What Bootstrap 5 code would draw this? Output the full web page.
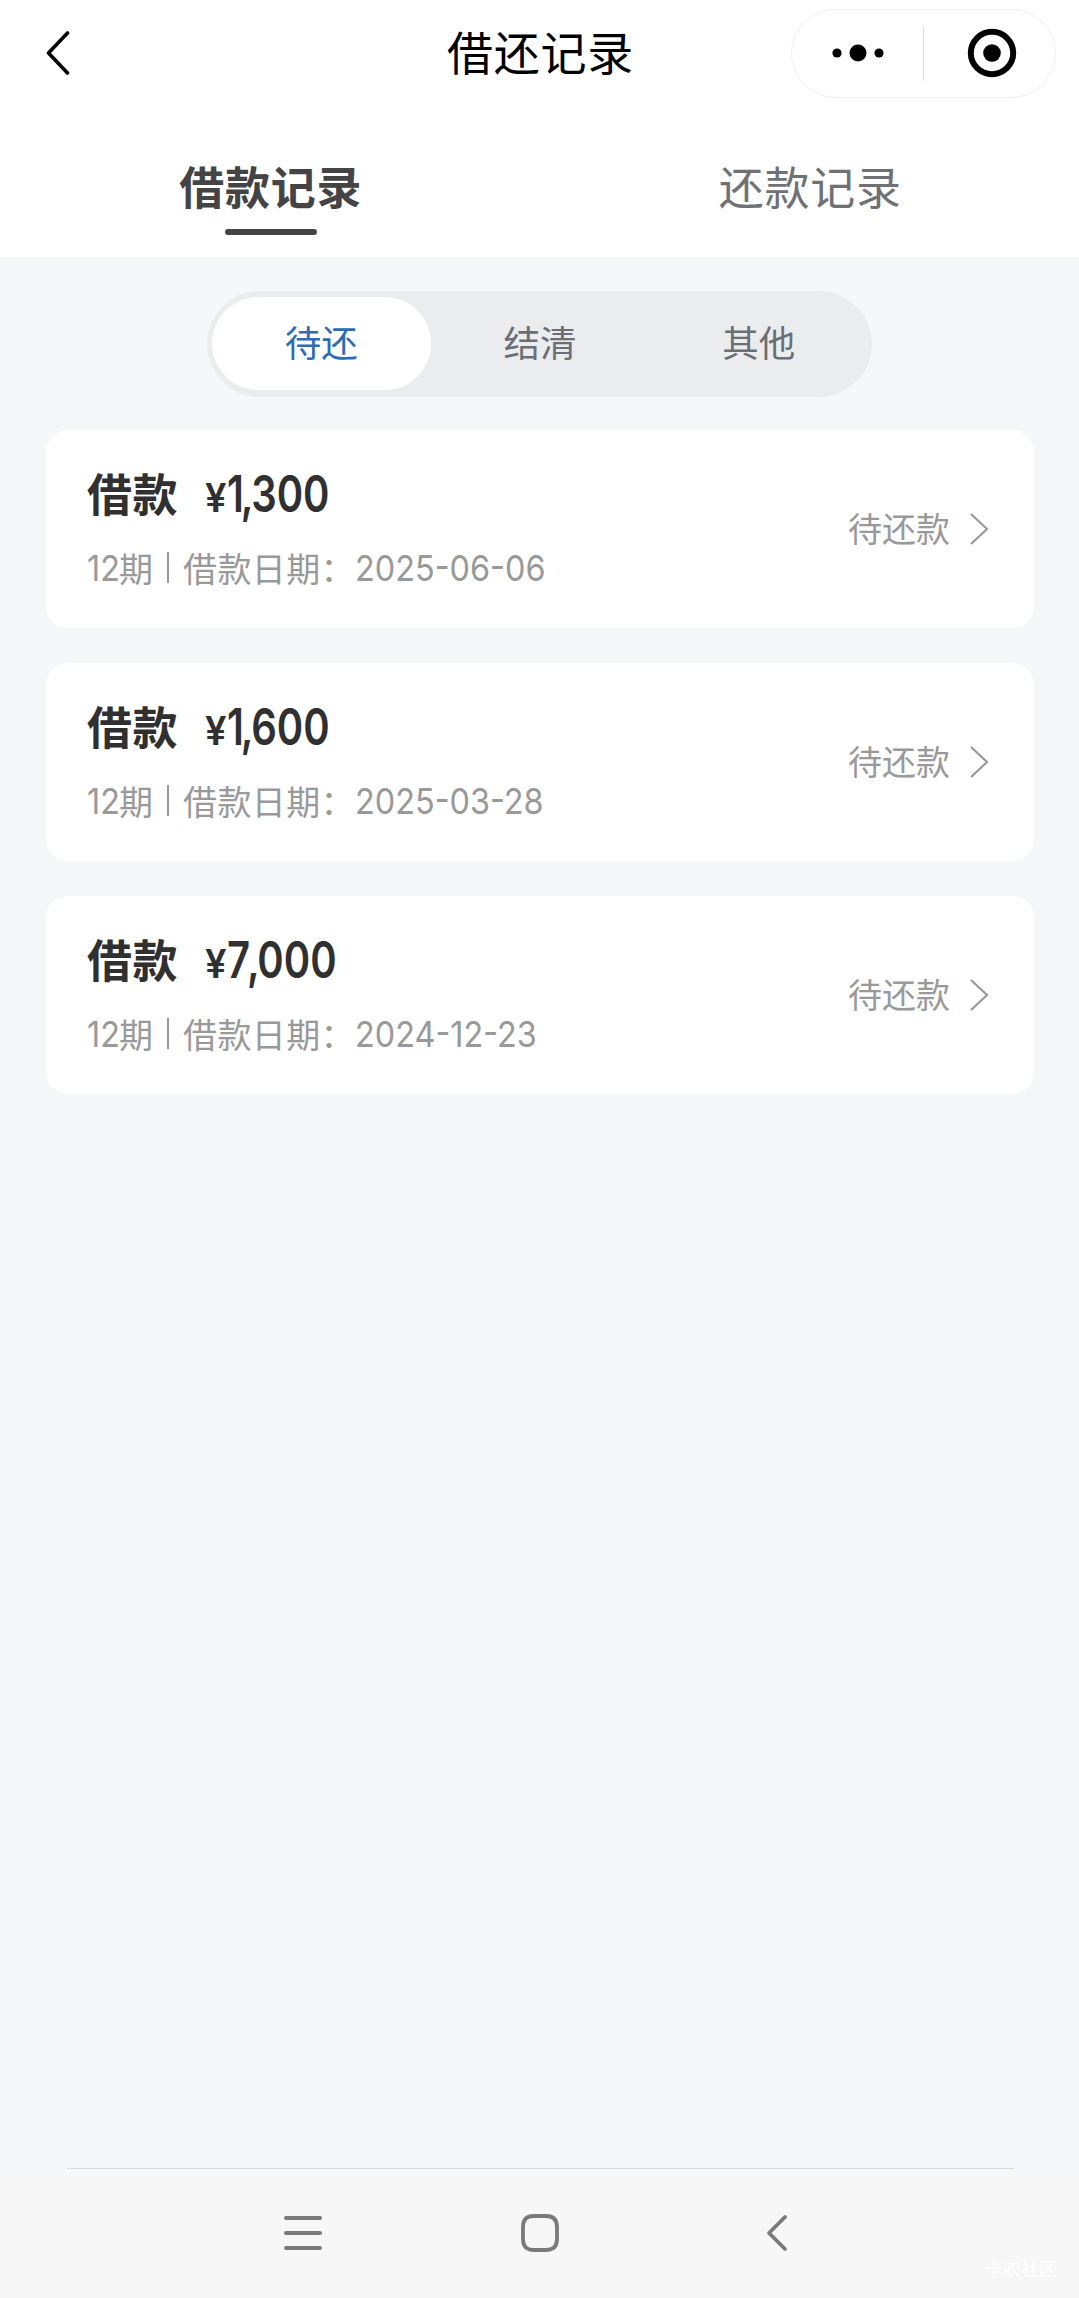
<!DOCTYPE html>
<html lang="zh-CN">
<head>
<meta charset="utf-8">
<meta name="viewport" content="width=device-width, initial-scale=1">
<title>借还记录</title>
<link href="https://cdn.jsdelivr.net/npm/bootstrap@5.3.0/dist/css/bootstrap.min.css" rel="stylesheet">
<style>
  body { font-family: "Noto Sans CJK SC", sans-serif; background: #f6f7f9; height: 2298px; line-height: 1; }
  .top-bar { height: 106px; padding: 0 23px; }
  .side { flex: 1 1 0; }
  .back { margin-left: 23px; }
  .page-title { font-size: 46px; letter-spacing: .8px; font-weight: 400; color: #000; padding: 0 0 4px 2px; }
  .capsule { width: 265px; height: 89px; border: 1.5px solid #efefef; border-radius: 45px; }
  .capsule .sep { width: 1px; height: 55px; background: #dedede; }
  .tab-row { height: 151px; }
  .tab-row .nav-link { height: 151px; padding: 56px 0 0 2px; font-size: 45px; letter-spacing: .8px; color: #707174; line-height: 48px; border: 0; }
  .tab-row .nav-link.active { color: #444; font-weight: 700; }
  .tab-row .nav-link.active::after { content: ""; display: block; width: 92px; height: 6px; margin: 19px auto 0; border-radius: 3px; background: #444; }
  .seg { width: 665px; height: 106px; margin-top: 34px; padding: 6px 4px 6px 5px; border-radius: 53px; background: #ebecee; }
  .seg .nav-link { height: 93px; padding: 0 0 3px; border-radius: 47px; font-size: 36.5px; color: #6c6e75; }
  .seg .nav-link.active { background: #fff; color: #2f6ab5; }
  .loans { margin: 33px 45px 0 46px; gap: 35px; }
  .loan { height: 198px; border: 0; border-radius: 22px; padding: 0 44px 3px 41px; }
  .loan-name { font-size: 45px; font-weight: 700; color: #303030; letter-spacing: .5px; line-height: 50px; width: 118px; }
  .num { font-family: Inter, "Noto Sans CJK SC", sans-serif; display: inline-block; transform-origin: 0 50%; white-space: nowrap; }
  .yen { font-size: 39px; font-weight: 600; width: 22px; transform: scaleX(.98); color: #303030; }
  .amount { font-size: 51px; font-weight: 600; transform: scaleX(.785); color: #303030; line-height: 50px; }
  .amount span { margin: 0 -3px 0 -4px; }
  .detail { font-size: 34px; line-height: 40px; margin-top: 29px; color: #999; }
  .detail .num { font-size: 36px; transform: scaleX(.9); }
  .label { letter-spacing: .4px; }
  .term { width: 32px; }
  .bar { width: 2px; height: 31px; background: #999; margin: 0 14px 0 14px; }
  .state { font-size: 34px; color: #999; padding-top: 3px; }
  .state span { padding-bottom: 2px; }
  .sys { height: 130px; background: #f7f7f7; }
  .sys .rule { height: 1px; background: #d9dadc; margin: 0 65px 0 67px; }
  .sys-icons { height: 129px; padding: 0 291px 1px 284px; }
  .sys-home { margin-right: 8px; }
  .water { font-size: 18px; color: #fff; right: 22px; bottom: 20px; line-height: 20px; }
</style>
<script src="https://cdn.jsdelivr.net/npm/bootstrap@5.3.0/dist/js/bootstrap.bundle.min.js"></script>
</head>
<body class="d-flex flex-column m-0">
<header class="bg-white">
  <div class="top-bar d-flex align-items-center">
    <div class="side"><svg class="back d-block" width="24" height="46" viewBox="0 0 24 46" fill="none" stroke="#000" stroke-width="3.6" stroke-linecap="round" stroke-linejoin="round"><path d="M21.5 3 2.5 23l19 20"/></svg></div>
    <h1 class="page-title m-0">借还记录</h1>
    <div class="side d-flex justify-content-end">
      <div class="capsule d-flex align-items-center">
        <div class="flex-fill d-flex justify-content-center"><svg width="54" height="20" viewBox="0 0 54 20"><circle cx="6" cy="10" r="4.6"/><circle cx="27" cy="10" r="8.5"/><circle cx="48" cy="10" r="4.6"/></svg></div>
        <div class="sep"></div>
        <div class="flex-fill d-flex justify-content-center ps-1"><svg width="50" height="50" viewBox="0 0 50 50"><circle cx="25" cy="25" r="21.2" fill="none" stroke="#000" stroke-width="6"/><circle cx="25" cy="25" r="8.8"/></svg></div>
      </div>
    </div>
  </div>
  <nav class="tab-row nav nav-fill flex-nowrap">
    <a class="nav-link w-50 active" href="#">借款记录</a>
    <a class="nav-link w-50" href="#">还款记录</a>
  </nav>
</header>
<main class="flex-grow-1">
  <div class="seg nav nav-pills nav-justified flex-nowrap mx-auto">
    <a class="nav-link active d-flex align-items-center justify-content-center" href="#">待还</a>
    <a class="nav-link d-flex align-items-center justify-content-center" href="#">结清</a>
    <a class="nav-link d-flex align-items-center justify-content-center" href="#">其他</a>
  </div>
  <div class="loans d-flex flex-column">
    <div class="loan card flex-row align-items-center justify-content-between">
      <div>
        <div class="d-flex align-items-baseline"><span class="loan-name">借款</span><span class="num yen">¥</span><span class="num amount">1<span>,</span>300</span></div>
        <div class="detail d-flex align-items-center"><span class="num term">12</span><span>期</span><span class="bar"></span><span class="label">借款日期：</span><span class="num">2025-06-06</span></div>
      </div>
      <div class="state d-flex align-items-center gap-3"><span>待还款</span><svg width="24" height="34" viewBox="0 0 24 34" fill="none" stroke="#999" stroke-width="2.2"><path d="M5 2l16 15L5 32"/></svg></div>
    </div>
    <div class="loan card flex-row align-items-center justify-content-between">
      <div>
        <div class="d-flex align-items-baseline"><span class="loan-name">借款</span><span class="num yen">¥</span><span class="num amount">1<span>,</span>600</span></div>
        <div class="detail d-flex align-items-center"><span class="num term">12</span><span>期</span><span class="bar"></span><span class="label">借款日期：</span><span class="num">2025-03-28</span></div>
      </div>
      <div class="state d-flex align-items-center gap-3"><span>待还款</span><svg width="24" height="34" viewBox="0 0 24 34" fill="none" stroke="#999" stroke-width="2.2"><path d="M5 2l16 15L5 32"/></svg></div>
    </div>
    <div class="loan card flex-row align-items-center justify-content-between">
      <div>
        <div class="d-flex align-items-baseline"><span class="loan-name">借款</span><span class="num yen">¥</span><span class="num amount">7<span>,</span>000</span></div>
        <div class="detail d-flex align-items-center"><span class="num term">12</span><span>期</span><span class="bar"></span><span class="label">借款日期：</span><span class="num">2024-12-23</span></div>
      </div>
      <div class="state d-flex align-items-center gap-3"><span>待还款</span><svg width="24" height="34" viewBox="0 0 24 34" fill="none" stroke="#999" stroke-width="2.2"><path d="M5 2l16 15L5 32"/></svg></div>
    </div>
  </div>
</main>
<footer class="sys position-relative">
  <div class="rule"></div>
  <div class="sys-icons d-flex align-items-center justify-content-between">
    <svg width="38" height="38" viewBox="0 0 38 38" stroke="#7a7a7a" stroke-width="4" stroke-linecap="round"><path d="M2 4h34M2 19h34M2 34h34"/></svg>
    <svg class="sys-home" width="38" height="38" viewBox="0 0 38 38" fill="none" stroke="#7a7a7a" stroke-width="3.8"><path d="M13 2H25Q36 2 36 13V25Q36 36 25 36H13Q2 36 2 25V13Q2 2 13 2Z"/></svg>
    <svg width="22" height="38" viewBox="0 0 22 38" fill="none" stroke="#7a7a7a" stroke-width="3.8" stroke-linecap="round" stroke-linejoin="round"><path d="M19 3 3 19l16 16"/></svg>
  </div>
  <span class="water position-absolute">卡农社区</span>
</footer>
</body>
</html>
